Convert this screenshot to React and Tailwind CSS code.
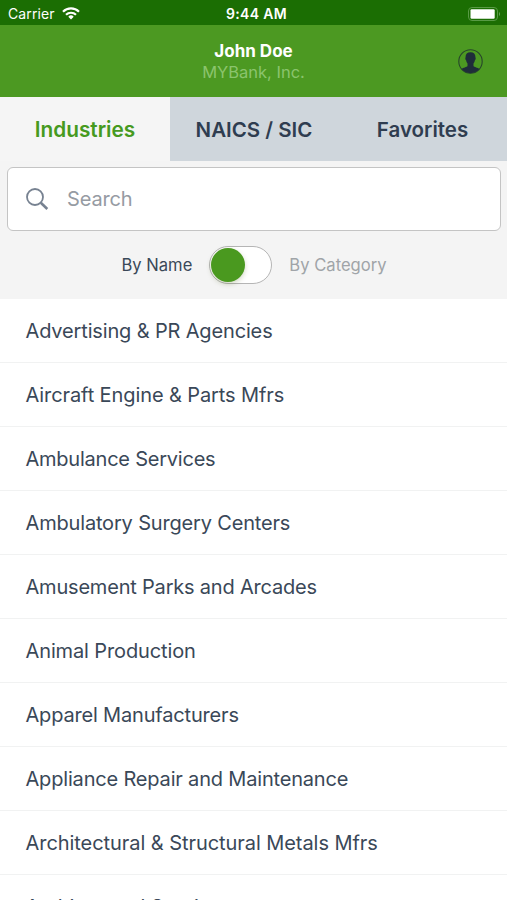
const INDUSTRIES = [
  { name: 'Advertising & PR Agencies', tracking: 'tracking-[-0.15px]' },
  { name: 'Aircraft Engine & Parts Mfrs', tracking: 'tracking-[-0.1px]' },
  { name: 'Ambulance Services', tracking: 'tracking-[-0.23px]' },
  { name: 'Ambulatory Surgery Centers', tracking: 'tracking-[-0.17px]' },
  { name: 'Amusement Parks and Arcades', tracking: 'tracking-[-0.2px]' },
  { name: 'Animal Production', tracking: 'tracking-[-0.12px]' },
  { name: 'Apparel Manufacturers', tracking: 'tracking-[-0.18px]' },
  { name: 'Appliance Repair and Maintenance', tracking: 'tracking-[-0.18px]' },
  { name: 'Architectural & Structural Metals Mfrs', tracking: 'tracking-[-0.06px]' },
  { name: 'Architectural Services', tracking: 'tracking-[-0.06px]' },
];

function WifiIcon() {
  return (
    <svg className="h-[13px] w-[18px]" viewBox="0 0 18 13" fill="none" stroke="#fff" strokeWidth="2.2">
      <path d="M1 4.7a11.3 11.3 0 0 1 16 0" />
      <path d="M4 7.8a7.1 7.1 0 0 1 10 0" />
      <path d="M9 12.4 6.3 9.7a3.8 3.8 0 0 1 5.4 0z" fill="#fff" stroke="none" />
    </svg>
  );
}

function BatteryIcon() {
  return (
    <svg className="h-[14px] w-[33px]" viewBox="0 0 33 14">
      <rect x="0.5" y="0.5" width="29" height="13" rx="3.5" fill="none" stroke="#589a45" />
      <rect x="2.5" y="2.3" width="24.2" height="9.4" rx="1.2" fill="#fff" />
      <path d="M31 5v4c1.3-.5 1.3-3.5 0-4z" fill="#6ba35b" />
    </svg>
  );
}

function ProfileIcon() {
  return (
    <svg className="h-[25px] w-[25px]" viewBox="0 0 25 25">
      <circle cx="12.5" cy="12.5" r="11.7" fill="none" stroke="#27462b" strokeWidth="1.1" />
      <path
        d="M12.5 3.2c-3.6 0-5.1 2-4.9 5-.6.5-.2 2.6.5 3.1.3 1.6.7 2.4 1.4 3.1v2.5c-.7 1.3-4.2 1.4-6 3a11.6 11.6 0 0 0 18 0c-1.8-1.6-5.3-1.7-6-3v-2.5c.7-.7 1.1-1.5 1.4-3.1.7-.5 1.1-2.6.5-3.1.2-3-1.3-5-4.9-5z"
        fill="#1f2d3a"
      />
    </svg>
  );
}

function SearchIcon() {
  return (
    <svg className="h-[22px] w-[23px]" viewBox="0 0 23 22" fill="none" stroke="#778291">
      <circle cx="9" cy="9" r="8" strokeWidth="1.8" />
      <path d="M14.8 14.8 21.3 21" strokeWidth="2.6" />
    </svg>
  );
}

export default function App() {
  return (
    <div className="flex h-[900px] w-[507px] flex-col overflow-hidden bg-white font-['Inter',sans-serif] text-[#3a4858]">
      <div className="grid h-[25px] shrink-0 grid-cols-3 items-center bg-[#1b6e03] pt-[2px] text-white">
        <div className="flex items-center gap-[7px] pl-[8px] text-[14px] tracking-[0.1px]">
          <span>Carrier</span>
          <WifiIcon />
        </div>
        <div className="pl-[6px] text-center text-[14px] font-semibold tracking-[0.3px]">9:44 AM</div>
        <div className="flex justify-end pr-[6px]">
          <BatteryIcon />
        </div>
      </div>

      <header className="grid h-[72px] shrink-0 grid-cols-[60px_1fr_60px] items-center bg-[#4c9922]">
        <span />
        <div className="pt-px text-center">
          <div className="text-[17px] leading-[21px] font-bold text-white">John Doe</div>
          <div className="text-[16.5px] leading-[21px] text-[#8bc46d]">MYBank, Inc.</div>
        </div>
        <div className="pl-[11px] pt-px">
          <ProfileIcon />
        </div>
      </header>

      <nav className="grid h-[64px] shrink-0 grid-cols-[170px_168px_169px] bg-[#cfd6dc] text-[20.5px] font-semibold text-[#2f3d50]">
        <button className="bg-[#f5f5f5] pt-[2px] text-[20.8px] text-[#469a1f]">Industries</button>
        <button className="pt-[2px]">NAICS / SIC</button>
        <button className="pt-[2px]">Favorites</button>
      </nav>

      <section className="h-[138px] shrink-0 bg-[#f4f4f4] pt-[6px] pr-[6px] pl-[7px]">
        <div className="flex h-[64px] items-center gap-[18px] rounded-[6px] border-[1.5px] border-[#c4c4c4] bg-white pl-[18px]">
          <SearchIcon />
          <span className="pb-px text-[20px] tracking-[-0.15px] text-[#969ba3]">Search</span>
        </div>
        <div className="flex h-[68px] items-center justify-center gap-[17px] text-[16.6px]">
          <span className="pt-px">By Name</span>
          <div className="h-[38px] w-[63px] rounded-full border border-[#b5b5b5] bg-white p-px">
            <div className="size-[34px] rounded-full bg-[#4a991f] shadow-[0_2px_5px_rgba(70,90,20,0.25)]" />
          </div>
          <span className="pt-px text-[#a0a4a8]">By Category</span>
        </div>
      </section>

      <ul className="shrink-0">
        {INDUSTRIES.map(({ name, tracking }) => (
          <li
            key={name}
            className={`flex h-[64px] items-center border-b border-[#f1f2f2] pl-[25.5px] text-[20px] ${tracking}`}
          >
            {name}
          </li>
        ))}
      </ul>
    </div>
  );
}
